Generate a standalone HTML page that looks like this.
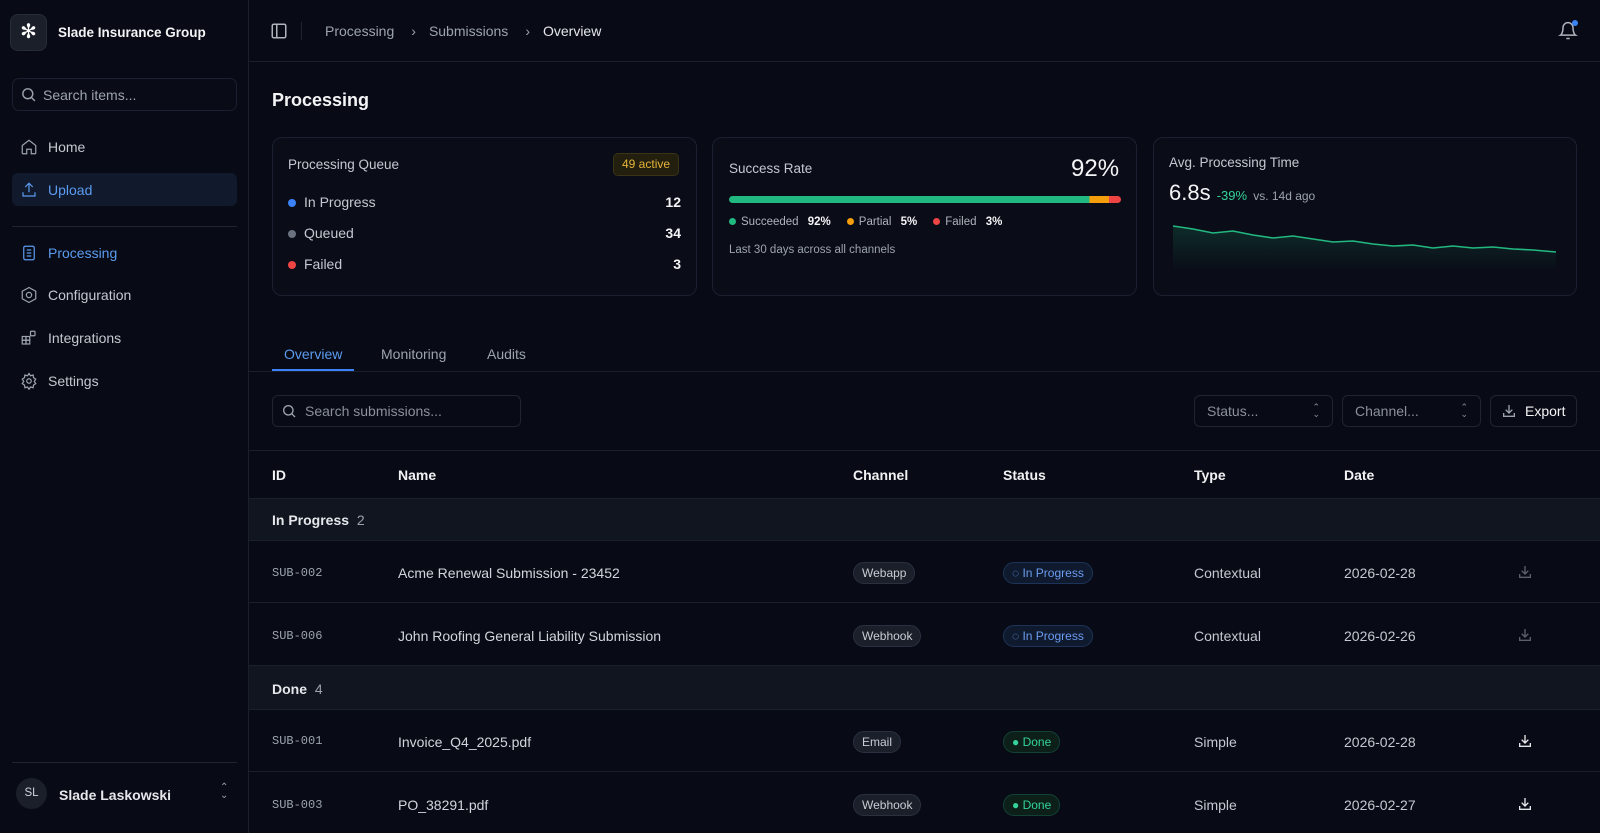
<!DOCTYPE html>
<html><head><meta charset="utf-8"><style>
*{box-sizing:border-box;margin:0;padding:0}
body{width:1600px;height:833px;overflow:hidden;background:#080b15;font-family:"Liberation Sans",sans-serif;color:#e5e7eb;position:relative;font-size:14px}
.a{position:absolute}
.sb{left:0;top:0;width:249px;height:833px;border-right:1px solid #1a1f2c;background:#080b15}
.nav{left:12px;width:225px;height:33px;display:flex;align-items:center;padding-left:8px;color:#c4c8d0;font-size:14px;border-radius:6px}
.nav svg{width:18px;height:18px;margin-right:10px;stroke:#9ca3af;fill:none;stroke-width:1.6}
.card{border:1px solid #1b2030;border-radius:10px;background:#0a0d17}
.muted{color:#9ca3af}
.dot{display:inline-block;width:8px;height:8px;border-radius:50%;margin-right:8px}
.th{top:467px;font-weight:bold;font-size:14px;color:#f1f2f4}
.row{left:249px;width:1351px;border-bottom:1px solid #1a1f2c}
.grp{left:249px;width:1351px;background:#10151f;border-bottom:1px solid #1a1f2c}
.id{font-family:"Liberation Mono",monospace;font-size:12px;color:#9ca3af;left:272px}
.nm{left:398px;font-size:14px;color:#d1d5db}
.pill{border:1px solid #2a3040;background:#1a1f2a;border-radius:12px;padding:3px 8px;font-size:12px;color:#c8ccd3}
.ip{border:1px solid #1e3358;background:#0f1a2e;border-radius:12px;padding:3px 8px;font-size:12px;color:#6b9cf0}
.dn{border:1px solid #134235;background:#0c2019;border-radius:12px;padding:3px 8px;font-size:12px;color:#34d399}
.tp{left:1194px;font-size:14px;color:#c4c8d0}
.dt{left:1344px;font-size:14px;color:#c4c8d0}
.sel{border:1px solid #1f2432;border-radius:6px;height:32px;top:395px;color:#8b909a;font-size:14px;display:flex;align-items:center;padding-left:12px}
</style></head><body>
<div class="a sb"></div>
<div class="a" style="left:10px;top:14px;width:37px;height:37px;border-radius:8px;background:#1a1f2a;border:1px solid #262c38;color:#fff;font-size:20px;text-align:center;line-height:35px">✻</div>
<div class="a" style="left:58px;top:25px;font-size:13.5px;font-weight:bold;color:#f3f4f6">Slade Insurance Group</div>
<div class="a" style="left:12px;top:78px;width:225px;height:33px;border:1px solid #1b2030;border-radius:7px;background:#090c16"></div>
<svg class="a" style="left:20px;top:86px" width="17" height="17" viewBox="0 0 24 24" fill="none" stroke="#9ca3af" stroke-width="2"><circle cx="11" cy="11" r="7"/><path d="M21 21l-5-5"/></svg>
<div class="a muted" style="left:43px;top:87px;font-size:14px">Search items...</div>
<div class="a nav" style="top:130px"><svg viewBox="0 0 24 24"><path d="M3 10l9-7 9 7v10a1 1 0 0 1-1 1h-5v-6h-6v6H4a1 1 0 0 1-1-1z"/></svg>Home</div>
<div class="a nav" style="top:173px;background:#111a2c;color:#5b9bf0"><svg viewBox="0 0 24 24" style="stroke:#5b9bf0"><path d="M12 15V3M7 8l5-5 5 5M4 15v5h16v-5"/></svg>Upload</div>
<div class="a" style="left:12px;top:226px;width:225px;height:1px;background:#1f2432"></div>
<div class="a nav" style="top:236px;color:#5b9bf0"><svg viewBox="0 0 24 24" style="stroke:#5b9bf0"><rect x="5" y="3" width="14" height="18" rx="2"/><path d="M9 8h6M9 12h6M9 16h6"/></svg>Processing</div>
<div class="a nav" style="top:278px"><svg viewBox="0 0 24 24"><path d="M12 2l9 5v10l-9 5-9-5V7z"/><circle cx="12" cy="12" r="3.5"/></svg>Configuration</div>
<div class="a nav" style="top:321px"><svg viewBox="0 0 24 24"><rect x="3" y="10" width="5" height="5"/><rect x="8" y="10" width="5" height="5"/><rect x="3" y="15" width="5" height="5"/><rect x="8" y="15" width="5" height="5"/><rect x="14" y="3" width="6" height="6" rx="1"/></svg>Integrations</div>
<div class="a nav" style="top:364px"><svg viewBox="0 0 24 24"><circle cx="12" cy="12" r="3"/><path d="M12 2l2 3 3.5-1 .5 3.5 3 2-2 3 2 3-3 2-.5 3.5-3.5-1-2 3-2-3-3.5 1-.5-3.5-3-2 2-3-2-3 3-2 .5-3.5 3.5 1z"/></svg>Settings</div>
<div class="a" style="left:12px;top:762px;width:225px;height:1px;background:#1f2432"></div>
<div class="a" style="left:16px;top:778px;width:31px;height:31px;border-radius:50%;background:#1a1f2a;font-size:11.5px;text-align:center;line-height:31px;color:#d1d5db">SL</div>
<div class="a" style="left:59px;top:787px;font-size:14px;font-weight:bold;color:#e5e7eb">Slade Laskowski</div>
<div class="a muted" style="left:220px;top:784px;font-size:10px;line-height:8px">⌃<br>⌄</div>

<!-- header -->
<div class="a" style="left:249px;top:61px;width:1351px;height:1px;background:#1a1f2c"></div>
<svg class="a" style="left:270px;top:22px" width="18" height="18" viewBox="0 0 24 24" fill="none" stroke="#aeb3bc" stroke-width="2"><rect x="3" y="3" width="18" height="18" rx="2"/><path d="M9 3v18"/></svg>
<div class="a" style="left:301px;top:22px;width:1px;height:18px;background:#1f2432"></div>
<div class="a" style="left:325px;top:23px;font-size:14px;color:#9ca3af;white-space:nowrap">Processing<span style="margin:0 13px 0 17px">›</span>Submissions<span style="margin:0 13px 0 17px">›</span><span style="color:#e5e7eb">Overview</span></div>
<svg class="a" style="left:1558px;top:21px" width="20" height="20" viewBox="0 0 24 24" fill="none" stroke="#aeb3bc" stroke-width="1.8"><path d="M6 8a6 6 0 0 1 12 0c0 7 3 9 3 9H3s3-2 3-9M10 21h4"/></svg>
<div class="a" style="left:1572px;top:20px;width:6px;height:6px;border-radius:50%;background:#3b82f6"></div>

<div class="a" style="left:272px;top:90px;font-size:18px;font-weight:bold;color:#f3f4f6">Processing</div>

<!-- card 1 -->
<div class="a card" style="left:272px;top:137px;width:425px;height:159px"></div>
<div class="a" style="left:288px;top:157px;font-size:13.5px;color:#c4c8d0">Processing Queue</div>
<div class="a" style="left:613px;top:153px;height:23px;padding:0 8px;border:1px solid #3a3315;background:#221f0e;border-radius:5px;color:#e5b53a;font-size:12px;line-height:21px">49 active</div>
<div class="a" style="left:288px;top:194px;width:393px;font-size:14px;color:#c4c8d0"><span class="dot" style="background:#3b82f6"></span>In Progress<b style="float:right;color:#f3f4f6">12</b></div>
<div class="a" style="left:288px;top:225px;width:393px;font-size:14px;color:#c4c8d0"><span class="dot" style="background:#6b7280"></span>Queued<b style="float:right;color:#f3f4f6">34</b></div>
<div class="a" style="left:288px;top:256px;width:393px;font-size:14px;color:#c4c8d0"><span class="dot" style="background:#ef4444"></span>Failed<b style="float:right;color:#f3f4f6">3</b></div>

<!-- card 2 -->
<div class="a card" style="left:712px;top:137px;width:425px;height:159px"></div>
<div class="a" style="left:729px;top:161px;font-size:13.5px;color:#c4c8d0">Success Rate</div>
<div class="a" style="left:1071px;top:155px;font-size:24px;color:#f3f4f6">92%</div>
<div class="a" style="left:729px;top:196px;width:392px;height:7px;border-radius:4px;background:linear-gradient(90deg,#22b981 0 92%,#f59e0b 92% 97%,#ef4444 97%)"></div>
<div class="a" style="left:729px;top:216px;font-size:11.5px;color:#aeb3bc;white-space:nowrap"><span class="dot" style="background:#22b981;width:7px;height:7px;margin-right:5px"></span>Succeeded <b style="color:#f3f4f6;margin:0 16px 0 6px">92%</b><span class="dot" style="background:#f59e0b;width:7px;height:7px;margin-right:5px"></span>Partial <b style="color:#f3f4f6;margin:0 16px 0 6px">5%</b><span class="dot" style="background:#ef4444;width:7px;height:7px;margin-right:5px"></span>Failed <b style="color:#f3f4f6;margin-left:6px">3%</b></div>
<div class="a" style="left:729px;top:244px;font-size:11.5px;color:#9ca3af">Last 30 days across all channels</div>

<!-- card 3 -->
<div class="a card" style="left:1153px;top:137px;width:424px;height:159px"></div>
<div class="a" style="left:1169px;top:155px;font-size:13.5px;color:#c4c8d0">Avg. Processing Time</div>
<div class="a" style="left:1169px;top:180px;font-size:22px;color:#f3f4f6">6.8s <span style="font-size:13px;color:#34d399">-39%</span> <span style="font-size:12px;color:#9ca3af">vs. 14d ago</span></div>
<svg class="a" style="left:1173px;top:222px" width="385" height="48" viewBox="0 0 385 48"><defs><linearGradient id="g" x1="0" y1="0" x2="0" y2="1"><stop offset="0" stop-color="#22b981" stop-opacity=".18"/><stop offset="1" stop-color="#22b981" stop-opacity="0"/></linearGradient></defs><path d="M0 4 L20 7 L40 11 L60 9 L80 13 L100 16 L120 14 L140 17 L160 20 L180 19 L200 22 L220 24 L240 23 L260 26 L280 24 L300 26 L320 25 L340 27 L360 28 L383 30 L383 48 L0 48Z" fill="url(#g)"/><path d="M0 4 L20 7 L40 11 L60 9 L80 13 L100 16 L120 14 L140 17 L160 20 L180 19 L200 22 L220 24 L240 23 L260 26 L280 24 L300 26 L320 25 L340 27 L360 28 L383 30" fill="none" stroke="#22b981" stroke-width="1.6"/></svg>

<!-- tabs -->
<div class="a" style="left:249px;top:371px;width:1351px;height:1px;background:#1a1f2c"></div>
<div class="a" style="left:284px;top:346px;font-size:14px;color:#5b9bf0">Overview</div>
<div class="a" style="left:272px;top:369px;width:82px;height:2px;background:#3b82f6"></div>
<div class="a" style="left:381px;top:346px;font-size:14px;color:#9ca3af">Monitoring</div>
<div class="a" style="left:487px;top:346px;font-size:14px;color:#9ca3af">Audits</div>

<!-- toolbar -->
<div class="a sel" style="left:272px;width:249px;padding-left:32px">Search submissions...</div>
<svg class="a" style="left:281px;top:403px" width="16" height="16" viewBox="0 0 24 24" fill="none" stroke="#9ca3af" stroke-width="2"><circle cx="11" cy="11" r="7"/><path d="M21 21l-5-5"/></svg>
<div class="a sel" style="left:1194px;width:139px">Status...<span style="position:absolute;right:12px;font-size:9px;line-height:7px">⌃<br>⌄</span></div>
<div class="a sel" style="left:1342px;width:139px">Channel...<span style="position:absolute;right:12px;font-size:9px;line-height:7px">⌃<br>⌄</span></div>
<div class="a sel" style="left:1490px;width:87px;color:#f3f4f6;padding-left:10px"><svg width="16" height="16" viewBox="0 0 24 24" fill="none" stroke="#9ca3af" stroke-width="2" style="margin-right:8px"><path d="M12 3v12M7 10l5 5 5-5M4 15v5h16v-5"/></svg>Export</div>

<!-- table -->
<div class="a" style="left:249px;top:450px;width:1351px;height:1px;background:#1a1f2c"></div>
<div class="a th" style="left:272px">ID</div>
<div class="a th" style="left:398px">Name</div>
<div class="a th" style="left:853px">Channel</div>
<div class="a th" style="left:1003px">Status</div>
<div class="a th" style="left:1194px">Type</div>
<div class="a th" style="left:1344px">Date</div>
<div class="a grp" style="top:498px;height:43px;border-top:1px solid #1a1f2c"></div>
<div class="a" style="left:272px;top:512px;font-size:14px;font-weight:bold">In Progress <span style="font-weight:normal;color:#9ca3af;margin-left:4px">2</span></div>
<div class="a row" style="top:541px;height:62px"></div>
<div class="a row" style="top:603px;height:63px"></div>
<div class="a grp" style="top:666px;height:44px"></div>
<div class="a" style="left:272px;top:681px;font-size:14px;font-weight:bold">Done <span style="font-weight:normal;color:#9ca3af;margin-left:4px">4</span></div>
<div class="a row" style="top:710px;height:62px"></div>

<div class="a id" style="top:566px">SUB-002</div><div class="a nm" style="top:565px">Acme Renewal Submission - 23452</div>
<div class="a pill" style="left:853px;top:562px">Webapp</div><div class="a ip" style="left:1003px;top:562px">◌ In Progress</div>
<div class="a tp" style="top:565px">Contextual</div><div class="a dt" style="top:565px">2026-02-28</div>

<div class="a id" style="top:629px">SUB-006</div><div class="a nm" style="top:628px">John Roofing General Liability Submission</div>
<div class="a pill" style="left:853px;top:625px">Webhook</div><div class="a ip" style="left:1003px;top:625px">◌ In Progress</div>
<div class="a tp" style="top:628px">Contextual</div><div class="a dt" style="top:628px">2026-02-26</div>

<div class="a id" style="top:734px">SUB-001</div><div class="a nm" style="top:734px">Invoice_Q4_2025.pdf</div>
<div class="a pill" style="left:853px;top:731px">Email</div><div class="a dn" style="left:1003px;top:731px">● Done</div>
<div class="a tp" style="top:734px">Simple</div><div class="a dt" style="top:734px">2026-02-28</div>

<div class="a id" style="top:798px">SUB-003</div><div class="a nm" style="top:797px">PO_38291.pdf</div>
<div class="a pill" style="left:853px;top:794px">Webhook</div><div class="a dn" style="left:1003px;top:794px">● Done</div>
<div class="a tp" style="top:797px">Simple</div><div class="a dt" style="top:797px">2026-02-27</div>

<svg class="a" style="left:1517px;top:564px" width="16" height="16" viewBox="0 0 24 24" fill="none" stroke="#5b606b" stroke-width="2"><path d="M12 3v12M7 10l5 5 5-5M4 15v5h16v-5"/></svg>
<svg class="a" style="left:1517px;top:627px" width="16" height="16" viewBox="0 0 24 24" fill="none" stroke="#5b606b" stroke-width="2"><path d="M12 3v12M7 10l5 5 5-5M4 15v5h16v-5"/></svg>
<svg class="a" style="left:1517px;top:733px" width="16" height="16" viewBox="0 0 24 24" fill="none" stroke="#e5e7eb" stroke-width="2"><path d="M12 3v12M7 10l5 5 5-5M4 15v5h16v-5"/></svg>
<svg class="a" style="left:1517px;top:796px" width="16" height="16" viewBox="0 0 24 24" fill="none" stroke="#e5e7eb" stroke-width="2"><path d="M12 3v12M7 10l5 5 5-5M4 15v5h16v-5"/></svg>
</body></html>
